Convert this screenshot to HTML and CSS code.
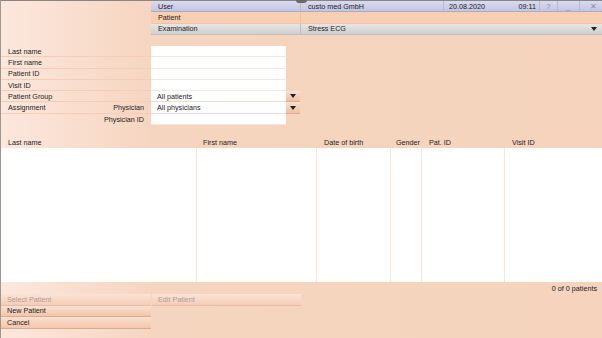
FILE: index.html
```html
<!DOCTYPE html>
<html lang="en">
<head>
    <meta charset="UTF-8">
    <title>Patient Search</title>
    <link rel="stylesheet" href="styles.css">
</head>
<body>
    <div class="app">
        <header class="topbar">
            <div class="grip"></div>
            <div class="info">
                <div class="info-row user">
                    <span class="key">User</span>
                    <span class="val">custo med GmbH</span>
                    <span class="date">20.08.2020</span>
                    <span class="time">09:11</span>
                    <span class="win">?</span>
                    <span class="win min">_</span>
                    <span class="win close">&#x2715;</span>
                </div>
                <div class="info-row patient">
                    <span class="key">Patient</span>
                    <span class="val"></span>
                </div>
                <div class="info-row exam">
                    <span class="key">Examination</span>
                    <span class="val">Stress ECG</span>
                    <span class="drop"><svg width="6" height="4" viewBox="0 0 6 4"><polygon points="0,0 6,0 3,4" fill="#222"/></svg></span>
                </div>
            </div>
        </header>

        <section class="search">
            <div class="row"><span class="lbl">Last name</span><span class="fld"></span></div>
            <div class="row"><span class="lbl">First name</span><span class="fld"></span></div>
            <div class="row"><span class="lbl">Patient ID</span><span class="fld"></span></div>
            <div class="row"><span class="lbl">Visit ID</span><span class="fld"></span></div>
            <div class="row">
                <span class="lbl">Patient Group</span>
                <span class="fld">All patients</span>
                <span class="btn"><svg width="6" height="4" viewBox="0 0 6 4"><polygon points="0,0 6,0 3,4" fill="#222"/></svg></span>
            </div>
            <div class="row">
                <span class="lbl split"><span>Assignment</span><span>Physician</span></span>
                <span class="fld">All physicians</span>
                <span class="btn"><svg width="6" height="4" viewBox="0 0 6 4"><polygon points="0,0 6,0 3,4" fill="#222"/></svg></span>
            </div>
            <div class="row last"><span class="lbl right">Physician ID</span><span class="fld"></span></div>
        </section>

        <section class="results">
            <div class="cols head">
                <span class="c1">Last name</span>
                <span class="c2">First name</span>
                <span class="c3">Date of birth</span>
                <span class="c4">Gender</span>
                <span class="c5">Pat. ID</span>
                <span class="c6">Visit ID</span>
            </div>
            <div class="cols body">
                <span class="c1"></span>
                <span class="c2"></span>
                <span class="c3"></span>
                <span class="c4"></span>
                <span class="c5"></span>
                <span class="c6"></span>
            </div>
            <div class="count">0 of 0 patients</div>
        </section>

        <footer class="actions">
            <div class="btn-row">
                <button class="disabled">Select Patient</button>
                <button class="disabled">Edit Patient</button>
            </div>
            <button>New Patient</button>
            <button>Cancel</button>
        </footer>
    </div>
</body>
</html>
```

FILE: styles.css
```css
body {
    margin: 0;
    font-family: "Liberation Sans", Arial, sans-serif;
    font-size: 7.2px;
    color: #1c1c1c;
}
.app {
    width: 602px;
    height: 338px;
    overflow: hidden;
    background: linear-gradient(to right, #fce7dd 0, #f6d5c0 150px, #f5d3bc 602px);
    border-left: 1px solid #a09690;
    box-sizing: border-box;
}

/* top bar */
.topbar {
    display: flex;
    height: 35px;
    border-top: 1px solid #8c8480;
    box-sizing: border-box;
    position: relative;
}
.grip {
    position: absolute;
    left: 295px;
    top: -1px;
    width: 11px;
    height: 3px;
    background: #6d6967;
    border-radius: 0 0 3px 3px;
}
.info {
    margin-left: 150px;
    flex: 1;
    display: flex;
    flex-direction: column;
}
.info-row {
    display: flex;
    align-items: center;
    height: 11px;
    border-bottom: 1px solid #e8c3ac;
}
.info-row .key {
    width: 150px;
    padding-left: 7px;
    box-sizing: border-box;
    border-right: 1px solid #c4b8b2;
    height: 100%;
    display: flex;
    align-items: center;
}
.info-row .val {
    flex: 1;
    padding-left: 7px;
}
.user {
    background: linear-gradient(#d8dbf0, #c2c6e2);
    border-bottom-color: #a9acc6;
}
.user .date {
    width: 57px;
    padding-left: 5px;
    border-left: 1px solid #b6b9d2;
    height: 100%;
    display: flex;
    align-items: center;
}
.user .time {
    width: 33px;
    text-align: right;
    padding-right: 3px;
    box-sizing: border-box;
}
.user .win {
    height: 100%;
    display: flex;
    align-items: center;
    justify-content: center;
    border-left: 1px solid #b6b9d2;
    color: #8e909e;
    width: 17px;
    font-size: 8px;
}
.user .min {
    width: 21px;
}
.user .close {
    width: 23px;
    padding-left: 4px;
    box-sizing: border-box;
}
.patient {
    background: #f9cfb3;
    border-bottom-color: #f3c3a5;
}
.patient .key {
    border-right-color: #f0bfa0;
}
.exam {
    background: linear-gradient(#e6e6e6, #cfcfcf);
    border-bottom-color: #bdbdbd;
    height: 11px;
}
.exam .key {
    border-right-color: #bfbfbf;
}
.drop {
    width: 16px;
    display: flex;
    justify-content: center;
}

/* search form */
.search {
    margin-top: 11px;
}
.row {
    display: flex;
    height: 11.3px;
}
.lbl {
    width: 150px;
    padding-left: 7px;
    box-sizing: border-box;
    border-bottom: 1px solid #f3cdb7;
    display: flex;
    align-items: center;
}
.row.last .lbl {
    border-bottom: none;
}
.lbl.split {
    justify-content: space-between;
    padding-right: 7px;
}
.lbl.right {
    justify-content: flex-end;
    padding-right: 7px;
}
.fld {
    width: 135px;
    background: #fff;
    border-bottom: 1px solid #f8e6dc;
    display: flex;
    align-items: center;
    padding-left: 6px;
    box-sizing: border-box;
}
.row:has(.btn) .fld {
    border-bottom-color: #f0dcd0;
}
.btn {
    width: 14px;
    background: linear-gradient(#fbe0d0, #f0c0a2);
    border-bottom: 1px solid #dcae92;
    display: flex;
    align-items: center;
    justify-content: center;
    box-sizing: border-box;
}

/* results table */
.results {
    margin-top: 11px;
}
.cols {
    display: flex;
}
.cols span {
    box-sizing: border-box;
    padding-left: 7px;
}
.c1 { width: 196px; }
.c2 { width: 120px; }
.c3 { width: 74px; }
.c4 { width: 31px; }
.c5 { width: 83px; }
.c6 { flex: 1; }
.head {
    height: 12px;
    align-items: center;
}
.head .c2 { padding-left: 6px; }
.head .c4 { padding-left: 5px; }
.body {
    height: 134px;
    background: #fff;
}
.body span {
    border-right: 1px solid #f8e6dc;
}
.body .c6 {
    border-right: none;
}
.count {
    height: 12px;
    text-align: right;
    padding-right: 5px;
    line-height: 13px;
}

/* bottom buttons */
.actions {
    display: flex;
    flex-direction: column;
}
.btn-row {
    display: flex;
    gap: 1px;
}
.actions button {
    width: 150px;
    height: 11.5px;
    padding: 0 0 0 6px;
    text-align: left;
    font-family: inherit;
    font-size: 7.2px;
    color: #1c1c1c;
    border: none;
    border-bottom: 1px solid #d9ab90;
    background: linear-gradient(#fbe0d1, #f2c6ab);
    cursor: pointer;
}
.actions button.disabled {
    color: #b19d93;
    border-bottom-color: #e2bea8;
    background: linear-gradient(#fbe3d6, #f4cdb6);
}
.btn-row button:last-child {
    width: 149px;
}
```
